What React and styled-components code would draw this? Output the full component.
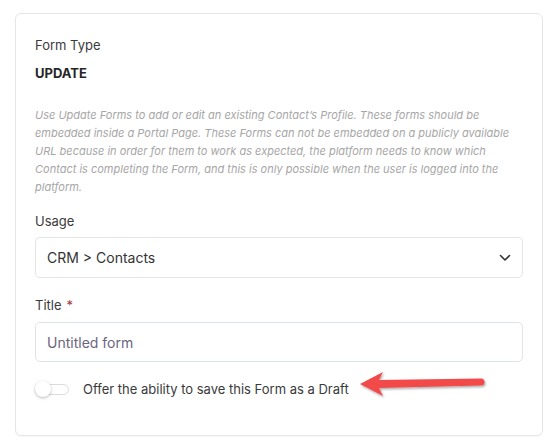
import React from 'react';
import styled, { createGlobalStyle } from 'styled-components';

const GlobalStyle = createGlobalStyle`
  html, body {
    margin: 0;
    padding: 0;
    background: #ffffff;
  }
  body {
    font-family: Inter, "Noto Sans", sans-serif;
    -webkit-font-smoothing: antialiased;
  }
`;

const Page = styled.div`
  padding: 13px 13px 12px 15px;
`;

const Card = styled.div`
  position: relative;
  width: 528px;
  box-sizing: border-box;
  border: 1px solid #e6e6e6;
  border-radius: 6px;
  box-shadow: 0 1px 2px rgba(0, 0, 0, 0.04);
  padding: 22px 19px 36px 19px;
  display: flex;
  flex-direction: column;
`;

const Label = styled.div`
  font-size: 13px;
  line-height: 18px;
  color: #3a3a3a;
  margin-top: ${p => p.$top || 0}px;
`;

const Required = styled.span`
  color: #a8323a;
  margin-left: 5px;
`;

const Value = styled.div`
  font-size: 13px;
  line-height: 18px;
  font-weight: 700;
  color: #262626;
  margin-top: 10px;
`;

const Help = styled.p`
  margin: 24px 0 0;
  font-size: 11px;
  line-height: 18px;
  font-style: italic;
  color: #a6a6a6;
`;

const Field = styled.div`
  margin-top: ${p => p.$top}px;
  height: ${p => p.$height}px;
  box-sizing: border-box;
  border: 1px solid ${p => p.$border};
  border-radius: 5px;
  display: flex;
  align-items: center;
  justify-content: space-between;
  padding: 0 11px 0 11px;
  font-size: 14px;
  color: ${p => p.$color};
`;

const Toggle = styled.div`
  position: relative;
  width: 34px;
  height: 11px;
  box-sizing: border-box;
  border: 1px solid #dcdcdc;
  border-radius: 6px;
  background: #fff;
  flex-shrink: 0;
  &::before {
    content: '';
    position: absolute;
    left: -1px;
    top: -4px;
    width: 16px;
    height: 16px;
    border-radius: 50%;
    background: #fff;
    box-shadow: 0 1px 3px rgba(0, 0, 0, 0.28);
  }
`;

const ToggleRow = styled.div`
  margin-top: 17px;
  display: flex;
  align-items: center;
  gap: 14px;
  height: 20px;
  font-size: 13px;
  color: #3a3a3a;
`;

// annotation arrow drawn over the card
const Arrow = styled.svg`
  position: absolute;
  left: 339px;
  top: 351px;
  overflow: visible;
`;

function Chevron() {
  return (
    <svg width="12" height="8" viewBox="0 0 12 8">
      <path d="M1.5 1.5 L6 6 L10.5 1.5" fill="none" stroke="#333" strokeWidth="1.6" strokeLinecap="round" strokeLinejoin="round" />
    </svg>
  );
}

export default function App() {
  return (
    <>
      <GlobalStyle />
      <Page>
        <Card>
          <Label>Form Type</Label>
          <Value>UPDATE</Value>
          <Help>
            Use Update Forms to add or edit an existing Contact’s Profile. These forms should be
            embedded inside a Portal Page. These Forms can not be embedded on a publicly available
            URL because in order for them to work as expected, the platform needs to know which
            Contact is completing the Form, and this is only possible when the user is logged into the
            platform.
          </Help>
          <Label $top={16}>Usage</Label>
          <Field $top={7} $height={41} $border="#e4e4e4" $color="#333">
            <span>CRM &gt; Contacts</span>
            <Chevron />
          </Field>
          <Label $top={18}>Title<Required>*</Required></Label>
          <Field $top={8} $height={40} $border="#dfe3ea" $color="#6b6580">
            <span>Untitled form</span>
          </Field>
          <ToggleRow>
            <Toggle />
            <span>Offer the ability to save this Form as a Draft</span>
          </ToggleRow>
          <Arrow width="132" height="38" viewBox="0 0 132 38">
            <defs>
              <filter id="sh" x="-20%" y="-50%" width="140%" height="200%">
                <feDropShadow dx="1" dy="1.5" stdDeviation="1.2" floodColor="#000" floodOpacity="0.35" />
              </filter>
            </defs>
            <path
              filter="url(#sh)"
              fill="#f24a4a"
              d="M5 19 L28 7 L24 15 L126 13.5 A3.5 3.5 0 0 1 126 20.5 L24 23 L28 31 Z"
            />
          </Arrow>
        </Card>
      </Page>
    </>
  );
}
